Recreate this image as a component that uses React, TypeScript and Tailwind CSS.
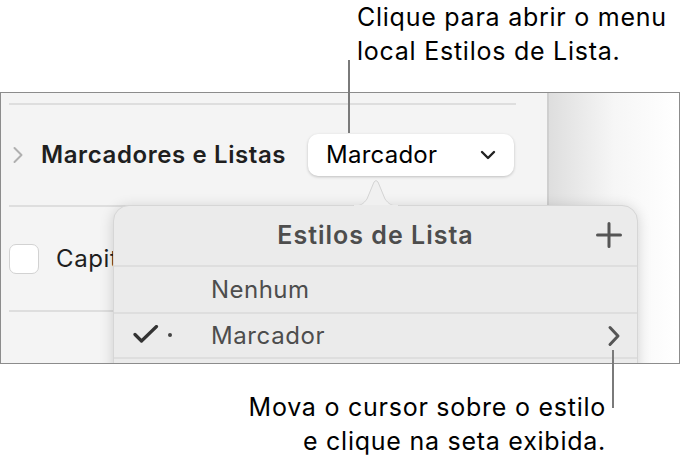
import React from 'react';

const Separator: React.FC<{ className?: string }> = ({ className = '' }) => (
    <div className={`h-[2px] bg-[#dedede] ${className}`} />
);

const ListStylesPopover: React.FC = () => {
    return (
        <div className="absolute left-[112px] top-[86px] w-[525px]">
            {/* Arrow pointing at the popup button */}
            <svg width="46" height="27" viewBox="0 0 46 27" className="absolute left-[240px] top-0 z-10">
                <path d="M0 27 C8 27 10 25 14 20 L21 3 Q23 0 25 3 L32 20 C36 25 38 27 46 27 Z" fill="#f0f0f0" stroke="#d4d4d4" strokeWidth="1" />
                <rect x="1" y="26" width="44" height="2" fill="#ebebeb" />
            </svg>

            <div className="mt-[26px] rounded-t-[16px] bg-[#ebebeb] border border-[#d6d6d6] shadow-[0_2px_14px_rgba(0,0,0,0.16)] text-[#4d4d4d]">
                {/* Header */}
                <div className="relative h-[59px] flex items-center justify-center">
                    <span className="text-[25px] font-semibold tracking-[0.04em]">Estilos de Lista</span>
                    <svg width="26" height="26" viewBox="0 0 26 26" className="absolute right-[15px] top-[16px]">
                        <path d="M13 1.5 V24.5 M1.5 13 H24.5" stroke="#555" strokeWidth="3" strokeLinecap="round" />
                    </svg>
                </div>
                <Separator />

                {/* Row: Nenhum */}
                <div className="h-[45px] flex items-center pl-[97px] text-[24px] tracking-[0.02em]">Nenhum</div>
                <Separator />

                {/* Row: Marcador (selected) */}
                <div className="relative h-[43px] flex items-center pl-[97px] text-[24px] tracking-[0.025em]">
                    <svg width="26" height="18" viewBox="0 0 26 18" className="absolute left-[19px] top-[11px]">
                        <path d="M2 9.5 L8.5 16 L23.5 1.5" fill="none" stroke="#333" strokeWidth="3.2" strokeLinecap="round" strokeLinejoin="round" />
                    </svg>
                    <span className="absolute left-[54px] top-[19px] w-[4px] h-[4px] rounded-full bg-[#444]" />
                    Marcador
                    <svg width="14" height="22" viewBox="0 0 14 22" className="absolute right-[16px] top-[11px]">
                        <path d="M3 2.5 L11 11 L3 19.5" fill="none" stroke="#555" strokeWidth="3" strokeLinecap="round" strokeLinejoin="round" />
                    </svg>
                </div>
                <Separator />
                <div className="h-[30px]" />
            </div>
        </div>
    );
};

const App: React.FC = () => {
    return (
        <div
            className="relative w-[684px] h-[468px] bg-white overflow-hidden text-black"
            style={{ fontFamily: 'Inter, "Noto Sans", sans-serif' }}
        >
            {/* Top callout */}
            <div className="h-[92px] pl-[357px] text-[25px] leading-[34px] tracking-[0.03em]">
                <p>Clique para abrir o menu</p>
                <p>local Estilos de Lista.</p>
            </div>

            {/* Screenshot frame */}
            <div className="relative w-[680px] h-[272px] border border-[#8c8c8c] overflow-hidden flex">
                {/* Sidebar */}
                <div className="w-[548px] h-full bg-[#f4f4f4] border-r-2 border-[#cfcfcf] flex flex-col">
                    <Separator className="mt-[10px] ml-[8px] w-[507px]" />

                    <div className="h-[100px] flex items-center">
                        <svg width="12" height="18" viewBox="0 0 12 18" className="ml-[11px]">
                            <path d="M2.5 2 L9.5 9 L2.5 16" fill="none" stroke="#b0b0b0" strokeWidth="2" strokeLinecap="round" strokeLinejoin="round" />
                        </svg>
                        <span className="ml-[17px] text-[24px] font-semibold tracking-[0.025em] text-[#1f1f1f]">Marcadores e Listas</span>
                        <div className="ml-auto mr-[33px] w-[206px] h-[42px] rounded-[10px] bg-white shadow-[0_1px_3px_rgba(0,0,0,0.22)] flex items-center pl-[18px] pr-[18px]">
                            <span className="text-[24px] tracking-[0.01em] text-black">Marcador</span>
                            <svg width="16" height="10" viewBox="0 0 16 10" className="ml-auto">
                                <path d="M2 2 L8 8 L14 2" fill="none" stroke="#222" strokeWidth="2.4" strokeLinecap="round" strokeLinejoin="round" />
                            </svg>
                        </div>
                    </div>

                    <Separator className="ml-[8px]" />

                    <div className="h-[103px] flex items-center">
                        <div className="ml-[8px] w-[30px] h-[30px] rounded-[7px] bg-white border border-[#d2d2d2]" />
                        <span className="ml-[17px] text-[24px] tracking-[0.025em] text-[#1f1f1f]">Capitular</span>
                    </div>

                    <Separator className="ml-[8px]" />
                </div>

                {/* Canvas edge with shadow */}
                <div className="flex-1 h-full bg-gradient-to-r from-[#dedede] via-[#f6f6f6] to-white" />

                <ListStylesPopover />
            </div>

            {/* Callout leader lines */}
            <div className="absolute left-[348px] top-[60px] w-[2px] h-[73px] bg-[#7a7a7a]" />
            <div className="absolute left-[612px] top-[350px] w-[2px] h-[58px] bg-[#7a7a7a]" />

            {/* Bottom callout */}
            <div className="pt-[26px] pr-[78px] text-right text-[25px] leading-[34px] tracking-[0.03em]">
                <p>Mova o cursor sobre o estilo</p>
                <p>e clique na seta exibida.</p>
            </div>
        </div>
    );
};

export default App;
